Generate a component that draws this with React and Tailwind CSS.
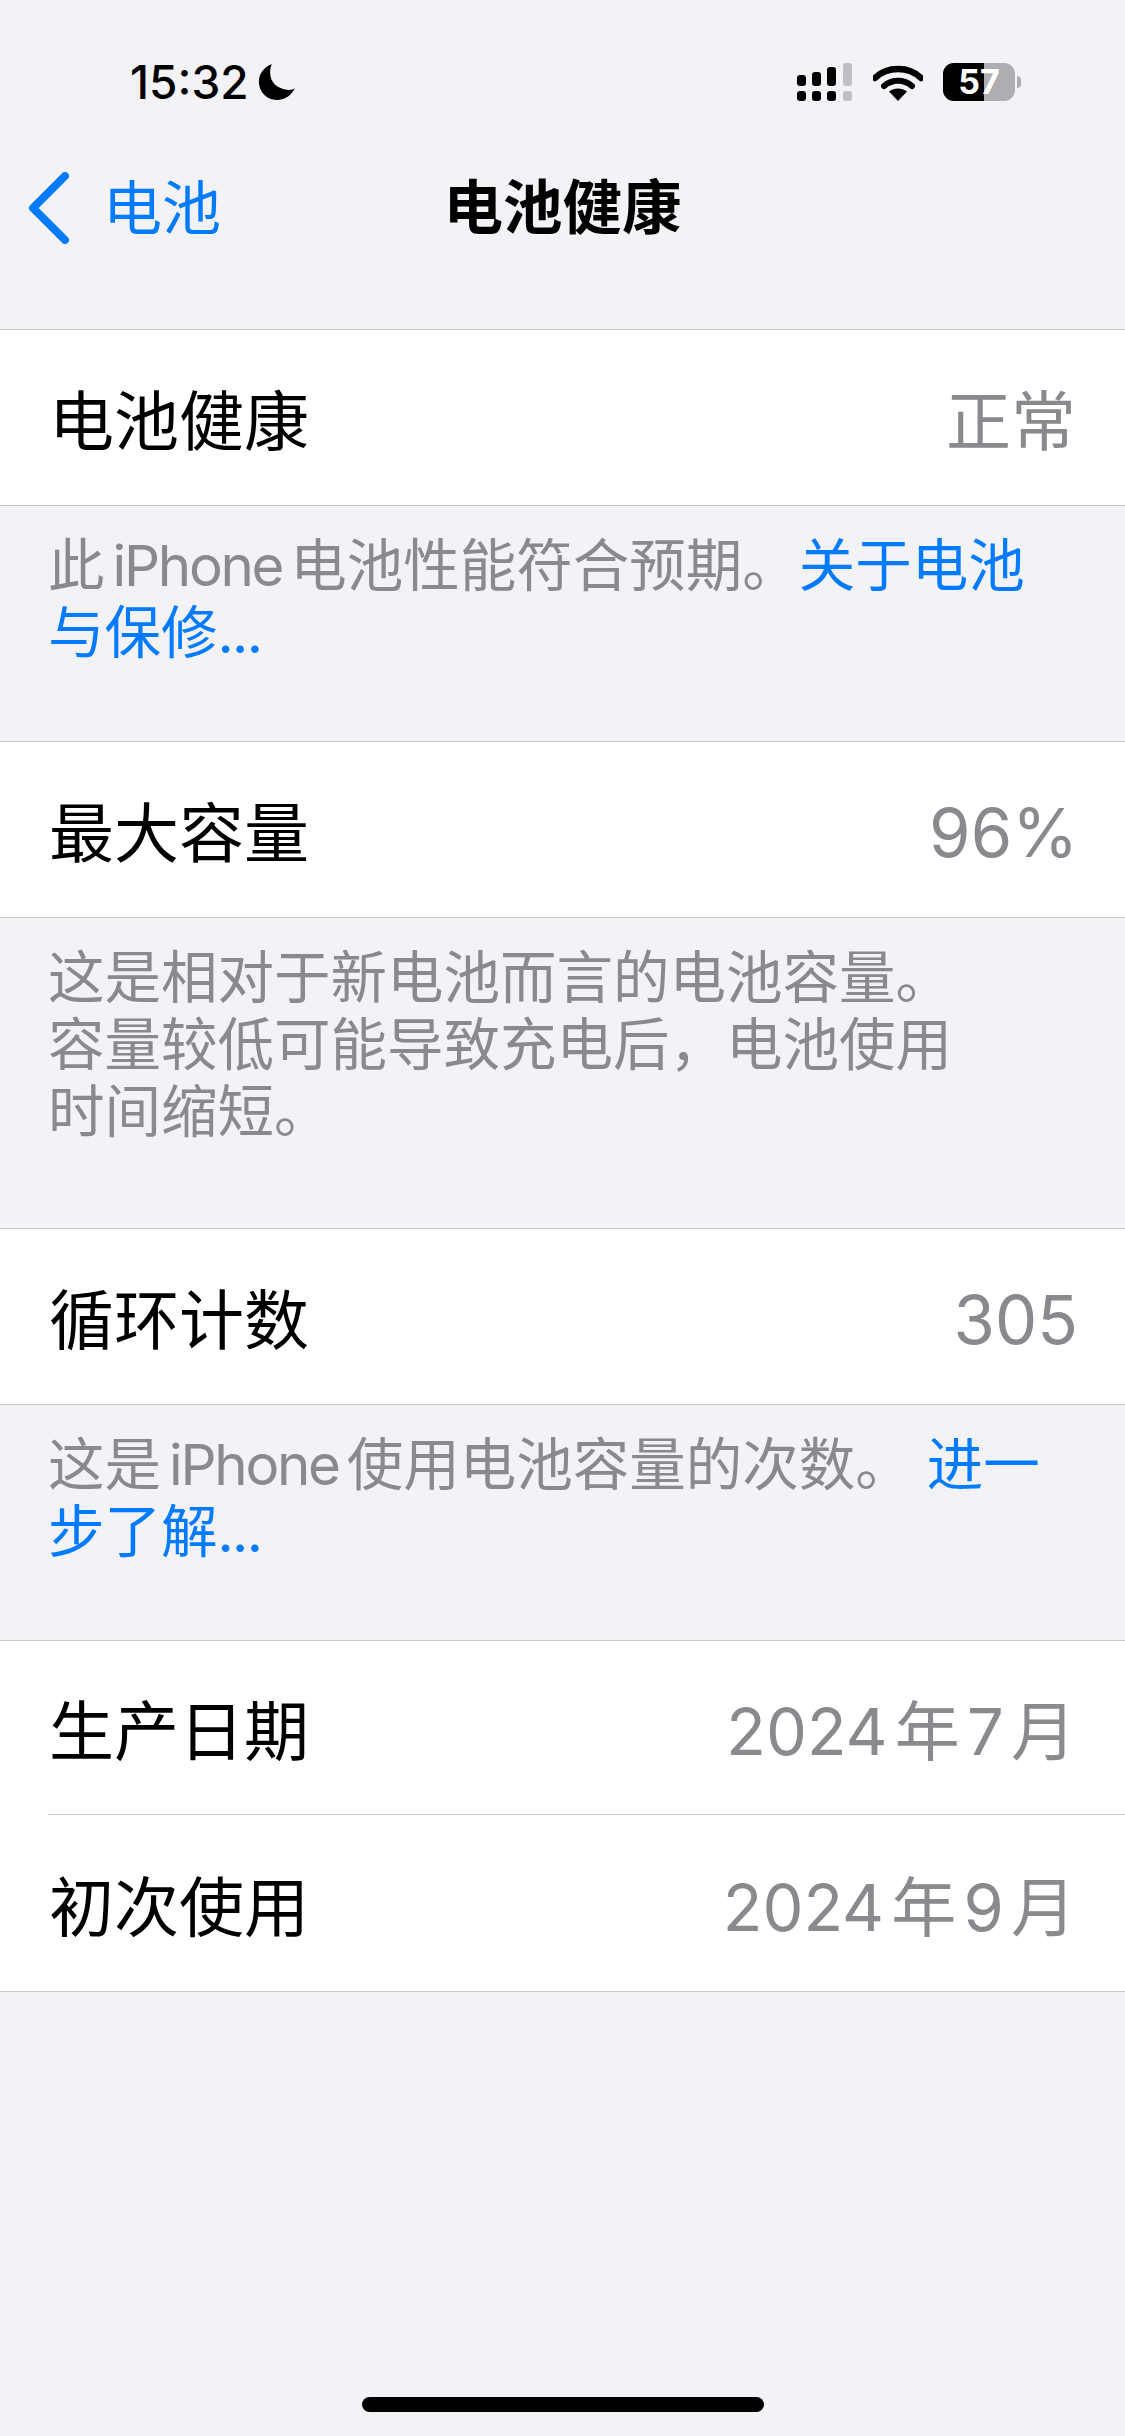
const cjk = "font-['Inter','Noto_Sans_CJK_SC','Liberation_Sans',sans-serif]"

function StatusBar() {
  return (
    <div className="flex h-[164px] items-center justify-between pl-[130px] pr-[104px]">
      <div className="flex items-center gap-[9px]">
        <span className="text-[46px] leading-none font-medium text-black">15:32</span>
        <svg width="38" height="38" viewBox="0 0 36 36">
          <path d="M13 1C4 5 0 12 1 20c1 9 9 16 18 15 7 0 13-5 16-11-3 2-8 2-13 0C13 21 9 11 13 1Z" fill="#000" />
        </svg>
      </div>
      <div className="flex items-center gap-[20px]">
        <svg width="56" height="38" viewBox="0 0 56 38">
          <g fill="#000">
            <rect x="0" y="12" width="9" height="11" rx="3" />
            <rect x="15" y="9" width="9" height="14" rx="3" />
            <rect x="30" y="4" width="9" height="19" rx="3" />
            <rect x="0" y="28" width="9" height="10" rx="3" />
            <rect x="15" y="28" width="9" height="10" rx="3" />
            <rect x="30" y="28" width="9" height="10" rx="3" />
          </g>
          <rect x="46" y="0" width="9" height="23" rx="3" fill="#c0c0c4" />
          <rect x="46" y="28" width="9" height="10" rx="3" fill="#c0c0c4" />
        </svg>
        <svg width="50" height="37" viewBox="0 0 50 37">
          <path d="M2 14C14 2 36 2 48 14" fill="none" stroke="#000" strokeWidth="6.5" strokeLinecap="round" />
          <path d="M11 22c8-7 20-7 28 0" fill="none" stroke="#000" strokeWidth="6" strokeLinecap="round" />
          <path d="M16 27.5c5-4 13-4 18 0L25 37Z" fill="#000" />
        </svg>
        <div className="flex items-center gap-[2px]">
          <div className="relative flex h-[38px] w-[72px] rounded-[11px] bg-[#aeaeb2]">
            <div className="h-full w-[41px] rounded-l-[11px] bg-black" />
            <span className="absolute inset-0 flex items-center justify-center text-[34px] leading-none font-bold text-white">57</span>
          </div>
          <div className="h-[12px] w-[4px] rounded-r-full bg-[#aeaeb2]" />
        </div>
      </div>
    </div>
  )
}

function NavBar() {
  return (
    <div className="relative flex h-[88px] items-center pl-[28px]">
      <svg width="44" height="72" viewBox="0 0 44 72">
        <path d="M37 4 5 36l32 32" fill="none" stroke="#007aff" strokeWidth="8" strokeLinecap="round" strokeLinejoin="round" />
      </svg>
      <span className="ml-[31px] text-[59px] leading-none text-[#007aff]">电池</span>
      <span className="absolute inset-0 flex items-center justify-center text-[59.5px] leading-none font-semibold text-black">电池健康</span>
    </div>
  )
}

function Row({ label, value, height = 'h-[175px]', latin }) {
  return (
    <div className={`flex items-center justify-between pl-[49px] pt-[8px] ${latin ? 'pr-[47px]' : 'pr-[49px]'} ${height}`}>
      <span className="text-[65px] leading-none text-black">{label}</span>
      <span className={`leading-none text-[#8a8a8e] [word-spacing:-0.17em] ${latin ? 'pb-[3px] text-[67px]' : 'text-[65px]'}`}>{value}</span>
    </div>
  )
}

function Group({ children }) {
  return <div className="border-y border-[#c8c8cc] bg-white">{children}</div>
}

function Note({ children, height }) {
  return (
    <div className={`pl-[48px] pt-[26px] whitespace-nowrap text-[56.5px] leading-[67px] text-[#8a8a8e] [word-spacing:-0.14em] ${height}`}>
      {children}
    </div>
  )
}

export default function App() {
  return (
    <div className={`flex h-[2436px] w-[1125px] flex-col overflow-hidden bg-[#f2f2f7] ${cjk}`}>
      <StatusBar />
      <NavBar />
      <div className="h-[77px]" />

      <Group>
        <Row label="电池健康" value="正常" />
      </Group>
      <Note height="h-[235px]">
        此 <span className="tracking-[-0.04em]">iPhone</span> 电池性能符合预期。<span className="text-[#007aff]">关于电池</span>
        <br />
        <span className="text-[#007aff]">与保修<span className="tracking-[-0.03em]">...</span></span>
      </Note>

      <Group>
        <Row label="最大容量" value="96%" latin />
      </Group>
      <Note height="h-[310px]">
        这是相对于新电池而言的电池容量。
        <br />
        容量较低可能导致充电后，电池使用
        <br />
        时间缩短。
      </Note>

      <Group>
        <Row label="循环计数" value="305" latin />
      </Group>
      <Note height="h-[235px]">
        这是 <span className="tracking-[-0.04em]">iPhone</span> 使用电池容量的次数。 <span className="ml-[7px] text-[#007aff]">进一</span>
        <br />
        <span className="text-[#007aff]">步了解<span className="tracking-[-0.03em]">...</span></span>
      </Note>

      <Group>
        <Row label="生产日期" value="2024 年 7 月" height="h-[173px]" />
        <div className="ml-[48px] h-px bg-[#c8c8cc]" />
        <Row label="初次使用" value="2024 年 9 月" height="h-[176px]" />
      </Group>

      <div className="flex flex-1 items-end justify-center pb-[24px]">
        <div className="h-[15px] w-[402px] rounded-full bg-black" />
      </div>
    </div>
  )
}
